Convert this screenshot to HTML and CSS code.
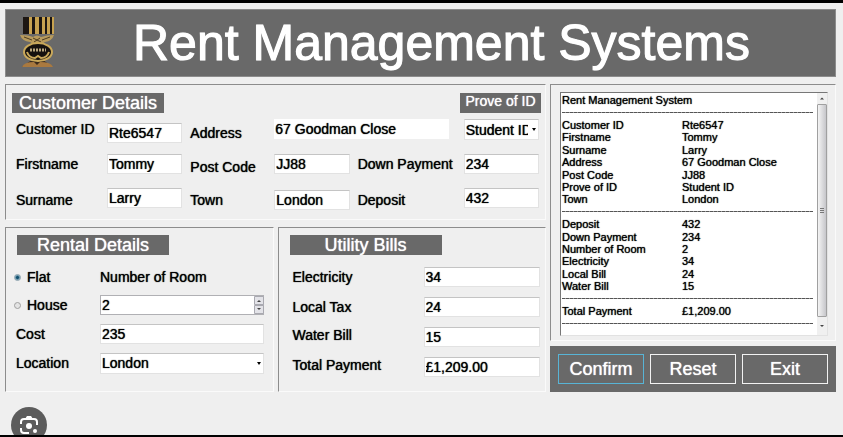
FILE: index.html
```html
<!DOCTYPE html>
<html lang="en">
<head>
<meta charset="utf-8">
<title>Rent Management Systems</title>
<link rel="stylesheet" href="styles.css">
</head>
<body>
<header class="banner">
  <svg class="medal" viewBox="0 0 36 54" aria-hidden="true">
    <path fill="#1c1612" d="M3 1h31v17H3z"/>
    <path fill="#c7a250" d="M9 1h3v17H9zM15 1h4v17h-4zM22 1h3v17h-3zM27 1h3v17h-3zM32 1h2v17h-2z"/>
    <path fill="#b79a5c" d="M0 19q9 0 13 2 4-3 8 0 6-2 13-2-2 6-9 7l-3 2h-9l-3-2Q2 25 0 19z"/>
    <path d="M4 21l8 3M30 21l-8 3M13 22l8 4M14 26l6-4" stroke="#4b3c22" fill="none"/>
    <path fill="#3a2a1b" d="M13 43h9l10 8H2z"/>
    <path fill="#a9793f" d="M2 51q2-5 12-5l3 3 3-3q11 0 13 5z"/>
    <ellipse cx="18" cy="36" rx="14" ry="9" fill="#15110e" stroke="#c9a85a" stroke-width="2"/>
    <path d="M7 36q2 6 8 6l3-2 3 2q6 0 8-6" fill="none" stroke="#c9a85a" stroke-width="2"/>
    <path d="M10 34h16" fill="none" stroke="#b9a77d" stroke-width="3" stroke-dasharray="2 1"/>
  </svg>
  <h1>Rent Management Systems</h1>
</header>

<main class="layout">
  <form class="forms">
    <section class="panel customer">
      <div class="customer-head">
        <h2 class="tag">Customer Details</h2>
        <label class="tag tag-small" for="proof">Prove of ID</label>
      </div>
      <div class="customer-grid">
        <label class="top" for="cid">Customer ID</label>
        <input class="low" id="cid" value="Rte6547">
        <label class="low inset" for="address">Address</label>
        <textarea class="top address" id="address" rows="1">67 Goodman Close</textarea>
        <span class="drop top"><select id="proof"><option>Student ID</option></select></span>

        <label class="top" for="first">Firstname</label>
        <input class="top" id="first" value="Tommy">
        <label class="low inset" for="post">Post Code</label>
        <input class="top" id="post" value="JJ88">
        <label class="top inset" for="down">Down Payment</label>
        <input class="top" id="down" value="234">

        <label class="low" for="sur">Surname</label>
        <input class="top" id="sur" value="Larry">
        <label class="low inset" for="town">Town</label>
        <input class="low" id="town" value="London">
        <label class="low inset" for="deposit">Deposit</label>
        <input class="top" id="deposit" value="432">
      </div>
    </section>

    <section class="panel rental">
      <h2 class="tag">Rental Details</h2>
      <div class="rental-grid">
        <label class="choice"><input type="radio" name="kind" checked>Flat</label>
        <label for="rooms">Number of Room</label>
        <label class="choice"><input type="radio" name="kind">House</label>
        <span class="spinner">
          <input id="rooms" value="2" inputmode="numeric">
          <svg viewBox="0 0 10 18" aria-hidden="true">
            <path fill="#e3e3e8" stroke="#a9a9b0" d="M.5.5h9v8h-9zM.5 9.5h9v8h-9z"/>
            <path fill="#444" d="M3 6h4L5 4zM3 12h4l-2 2z"/>
          </svg>
        </span>
        <label for="cost">Cost</label>
        <input id="cost" value="235">
        <label for="location">Location</label>
        <span class="drop"><select id="location"><option>London</option></select></span>
      </div>
    </section>

    <section class="panel utility">
      <h2 class="tag">Utility Bills</h2>
      <div class="utility-grid">
        <label for="elec">Electricity</label>
        <input id="elec" value="34">
        <label for="tax">Local Tax</label>
        <input id="tax" value="24">
        <label class="raised" for="water">Water Bill</label>
        <input id="water" value="15">
        <label class="raised" for="total">Total Payment</label>
        <input id="total" value="£1,209.00">
      </div>
    </section>
  </form>

  <aside class="side">
    <section class="panel receipt-panel">
      <div class="receipt">
        <dl class="lines">
          <dt class="wide">Rent Management System</dt><dd class="rule"></dd>
          <dt>Customer ID</dt><dd>Rte6547</dd>
          <dt>Firstname</dt><dd>Tommy</dd>
          <dt>Surname</dt><dd>Larry</dd>
          <dt>Address</dt><dd>67 Goodman Close</dd>
          <dt>Post Code</dt><dd>JJ88</dd>
          <dt>Prove of ID</dt><dd>Student ID</dd>
          <dt>Town</dt><dd>London</dd><dd class="rule"></dd>
          <dt>Deposit</dt><dd>432</dd>
          <dt>Down Payment</dt><dd>234</dd>
          <dt>Number of Room</dt><dd>2</dd>
          <dt>Electricity</dt><dd>34</dd>
          <dt>Local Bill</dt><dd>24</dd>
          <dt>Water Bill</dt><dd>15</dd><dd class="rule"></dd>
          <dt>Total Payment</dt><dd>£1,209.00</dd><dd class="rule"></dd>
        </dl>
        <div class="scroll" aria-hidden="true">
          <svg viewBox="0 0 10 10"><path fill="#444" d="M3 6h4L5 4z"/></svg>
          <div class="thumb"><i></i></div>
          <svg viewBox="0 0 10 10"><path fill="#444" d="M3 4h4L5 6z"/></svg>
        </div>
      </div>
    </section>
    <div class="actions">
      <button class="primary" type="button">Confirm</button>
      <button type="button">Reset</button>
      <button type="button">Exit</button>
    </div>
  </aside>
</main>

<footer class="foot">
  <button class="lens" type="button" aria-label="Search image">
    <svg viewBox="0 0 36 36" aria-hidden="true">
      <path d="M10 17v-2q0-3 3-3h10q3 0 3 3v3M10 21v2q0 3 3 3h5" fill="none" stroke="#fff" stroke-width="2"/>
      <path fill="#fff" d="M14 12l2-3h4l2 3z"/>
      <circle cx="18" cy="19" r="3" fill="#fff"/>
      <circle cx="24" cy="24" r="2" fill="#fff"/>
    </svg>
  </button>
</footer>
</body>
</html>
```
FILE: styles.css
```css
* { box-sizing: border-box; }

body {
  margin: 0;
  min-height: 100vh;
  display: flex;
  flex-direction: column;
  border-top: 3px solid #000;
  border-bottom: 2px solid #000;
  background: #efefef;
  color: #000;
  font: 14px/20px "Liberation Sans", Arial, sans-serif;
  text-shadow: 0 0 1px currentColor;
}

h1, h2, dl, dd { margin: 0; font-weight: 400; }

input, select, textarea, button {
  margin: 0;
  border: 0;
  border-radius: 0;
  font: inherit;
  color: inherit;
  text-shadow: inherit;
}

input, select, textarea {
  display: block;
  width: 100%;
  min-width: 0;
  height: 20px;
  padding: 0 1px;
  background: #fff;
  border: 1px solid #e2e2e2;
  border-top-color: #c4c4c4;
  line-height: 18px;
}

label { white-space: nowrap; }

.banner {
  display: flex;
  align-items: center;
  height: 68px;
  margin: 6px 7px 7px 5px;
  padding-left: 14px;
  background: #696969;
  border: 1px solid #8c8c8c;
  color: #fff;
}
.medal { width: 36px; height: 54px; flex: none; }
.banner h1 {
  flex: 1;
  padding-right: 8px;
  font-size: 50px;
  line-height: 60px;
  text-align: center;
  white-space: nowrap;
  -webkit-text-stroke: 1px #fff;
}

.layout {
  display: grid;
  grid-template-columns: minmax(0, 541fr) minmax(0, 286fr);
  gap: 4px;
  margin: 0 7px 0 5px;
}

.forms {
  display: grid;
  grid-template-columns: 1fr 1fr;
  gap: 7px 4px;
}

.panel {
  border: 1px solid #fafafa;
  border-top-color: #8c8c8c;
  border-left-color: #8c8c8c;
}

.tag {
  background: #696969;
  color: #fff;
  width: 152px;
  height: 20px;
  font-size: 18px;
  line-height: 20px;
  text-align: center;
}
.tag-small { width: 81px; font-size: 14px; line-height: 16px; }

.customer { grid-column: 1 / -1; padding: 8px 4px 9px 6px; }
.customer-head { display: flex; justify-content: space-between; }
.customer-grid {
  display: grid;
  grid-template-columns: 91px 1fr 92px 1fr 114px 1fr;
  grid-template-rows: 24px 23px 22px;
  row-gap: 11px;
  margin: 6px 2px 0 4px;
}
.top { align-self: start; }
.low { align-self: end; }
.inset { padding-left: 8px; }
.address {
  grid-column: span 2;
  width: auto;
  margin-right: 15px;
  padding: 0;
  border-color: #fff;
  resize: none;
  overflow: hidden;
}

.drop { position: relative; display: block; }
.drop select { appearance: none; height: 21px; padding-right: 10px; }
.drop::after {
  content: "";
  position: absolute;
  right: 3px;
  top: 9px;
  border: 2px solid transparent;
  border-top: 3px solid #000;
}

.rental, .utility { padding: 7px 9px 14px 11px; }
.rental-grid {
  display: grid;
  grid-template-columns: 84px 1fr;
  grid-template-rows: 18px 20px 20px 20px;
  row-gap: 9px;
  margin: 13px 0 0 -1px;
  align-items: center;
}
.choice { display: flex; align-items: center; gap: 6px; margin-left: -2px; }
.choice input {
  appearance: none;
  width: 7px;
  height: 7px;
  padding: 0;
  border: 1px solid #a0a0a0;
  border-radius: 50%;
  background: #e4e4e4;
}
.choice input:checked {
  border-color: #8aa0ac;
  background: radial-gradient(circle, #12506e 0 1px, #bcd7e4 3px);
}
.spinner { position: relative; display: block; }
.spinner input { border-color: #b0b0b4; }
.spinner svg { position: absolute; right: 0; top: 1px; width: 10px; height: 18px; }

.utility-grid {
  display: grid;
  grid-template-columns: 131px 1fr;
  grid-auto-rows: 20px;
  row-gap: 10px;
  margin: 12px -4px 0 3px;
}
.raised { line-height: 16px; }

.side { display: flex; flex-direction: column; gap: 5px; }
.receipt-panel { flex: 1; display: flex; padding: 7px 7px 4px 9px; }
.receipt {
  flex: 1;
  display: flex;
  background: #fff;
  border: 1px solid #e2e2e2;
  border-top-color: #777;
  border-left-color: #777;
}
.lines {
  flex: 1;
  display: grid;
  grid-template-columns: 120px 1fr;
  grid-auto-rows: 1fr;
  padding: 1px 4px 5px 1px;
  font-size: 11px;
  line-height: 12px;
  white-space: nowrap;
}
.wide { grid-column: 1 / -1; }
.rule {
  grid-column: 1 / -1;
  align-self: center;
  height: 1px;
  background: repeating-linear-gradient(90deg, #555 0 3px, #999 3px 4px);
}

.scroll { display: flex; flex-direction: column; width: 10px; background: #f0f0f0; }
.scroll svg { width: 10px; height: 11px; }
.scroll svg:last-child { height: 18px; }
.thumb {
  flex: 1;
  display: flex;
  align-items: center;
  justify-content: center;
  border: 1px solid #a0a0a0;
  border-radius: 1px;
  background: linear-gradient(90deg, #f4f4f4, #c6c6ca);
}
.thumb i {
  width: 4px;
  height: 5px;
  background: repeating-linear-gradient(#777 0 1px, transparent 1px 2px);
}

.actions {
  display: grid;
  grid-template-columns: repeat(3, 1fr);
  gap: 6px;
  padding: 8px;
  background: #696969;
}
.actions button {
  height: 30px;
  padding: 0;
  background: #696969;
  border: 1px solid #f2f2f2;
  color: #fff;
  font-size: 18px;
}
.actions .primary { border-color: #58b4d6; }

.foot { position: relative; flex: 1; min-height: 42px; overflow: hidden; }
.lens {
  position: absolute;
  left: 11px;
  top: 15px;
  width: 36px;
  height: 36px;
  padding: 0;
  border-radius: 50%;
  background: #5c5c5c;
}
.lens svg { display: block; width: 36px; height: 36px; }
```
